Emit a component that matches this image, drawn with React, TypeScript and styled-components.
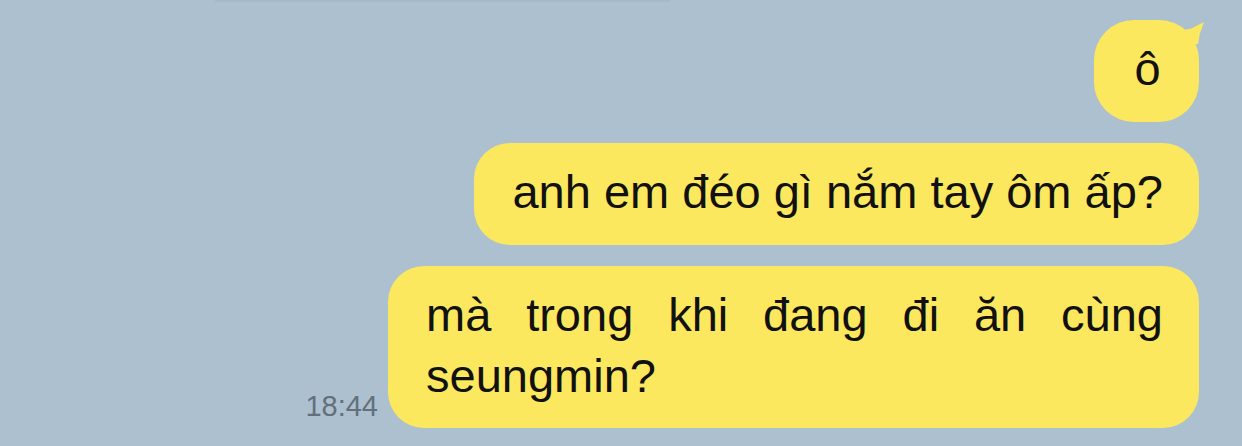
import React from "react";
import styled, { createGlobalStyle } from "styled-components";

const GlobalStyle = createGlobalStyle`
  html, body {
    margin: 0;
    padding: 0;
    background: #acc0d0;
  }
  body {
    font-family: "Liberation Sans", Arial, sans-serif;
  }
`;

const Page = styled.div`
  width: 1242px;
  height: 446px;
  background: #acc0d0;
  display: flex;
  flex-direction: column;
  overflow: hidden;
`;

const TopEdge = styled.div`
  width: 455px;
  height: 2px;
  margin-left: 215px;
  background: #a5b9ca;
`;

const Thread = styled.div`
  display: flex;
  flex-direction: column;
  align-items: flex-end;
  gap: 21px;
  padding: 18px 43px 0 0;
`;

const Row = styled.div`
  display: flex;
  align-items: flex-end;
  gap: 10px;
`;

const Time = styled.span`
  font-size: 29px;
  line-height: 29px;
  color: #63707c;
  margin-bottom: 7px;
`;

type Align = "left" | "center" | "justify";

const Bubble = styled.div<{ $tail?: boolean; $align?: Align }>`
  position: relative;
  box-sizing: border-box;
  min-width: 105px;
  min-height: 102px;
  max-width: 811px;
  background: #fbe85f;
  color: #111;
  border-radius: ${(p) => (p.$tail ? "40px" : "36px")};
  padding: 18px 36px 22px 38px;
  font-size: 47px;
  line-height: 61px;
  text-align: ${(p) => p.$align ?? "left"};

  ${(p) =>
    p.$tail &&
    `
    &::after {
      content: "";
      position: absolute;
      right: -5px;
      top: 2px;
      width: 21px;
      height: 22px;
      background: #fbe85f;
      clip-path: polygon(0% 38%, 40% 30%, 100% 0%, 80% 55%, 72% 100%, 20% 100%);
    }
  `}
`;

export default function App() {
  return (
    <>
      <GlobalStyle />
      <Page>
        <TopEdge />
        <Thread>
          <Row>
            <Bubble $tail $align="center">
              ô
            </Bubble>
          </Row>
          <Row>
            <Bubble>anh em đéo gì nắm tay ôm ấp?</Bubble>
          </Row>
          <Row>
            <Time>18:44</Time>
            <Bubble $align="justify">mà trong khi đang đi ăn cùng seungmin?</Bubble>
          </Row>
        </Thread>
      </Page>
    </>
  );
}
